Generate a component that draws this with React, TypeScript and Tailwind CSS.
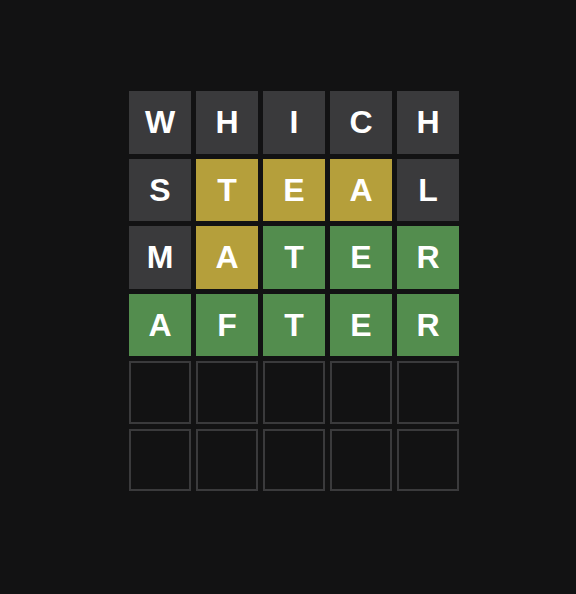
import React from "react";

type S = "a" | "p" | "c" | "e";
const rows: { l: string; s: S }[][] = [
  [..."WHICH"].map((l) => ({ l, s: "a" as S })),
  [
    { l: "S", s: "a" },
    { l: "T", s: "p" },
    { l: "E", s: "p" },
    { l: "A", s: "p" },
    { l: "L", s: "a" },
  ],
  [
    { l: "M", s: "a" },
    { l: "A", s: "p" },
    { l: "T", s: "c" },
    { l: "E", s: "c" },
    { l: "R", s: "c" },
  ],
  [..."AFTER"].map((l) => ({ l, s: "c" as S })),
  [..."     "].map(() => ({ l: "", s: "e" as S })),
  [..."     "].map(() => ({ l: "", s: "e" as S })),
];

const cls: Record<S, string> = {
  a: "bg-[#3a3a3c]",
  p: "bg-[#b59f3b]",
  c: "bg-[#538d4e]",
  e: "border-2 border-[#3a3a3c]",
};

export default function App() {
  return (
    <div
      className="w-[576px] h-[594px] bg-[#121213] pl-[129px] pt-[91px]"
      style={{ fontFamily: '"Liberation Sans", Arial, sans-serif' }}
    >
      <div className="grid grid-cols-[repeat(5,62px)] grid-rows-[repeat(6,62.5px)] gap-[5px] w-[330px]">
        {rows.flat().map((t, i) => (
          <div
            key={i}
            className={`flex items-center justify-center text-white font-bold text-[32px] leading-none ${cls[t.s]}`}
          >
            {t.l}
          </div>
        ))}
      </div>
    </div>
  );
}
